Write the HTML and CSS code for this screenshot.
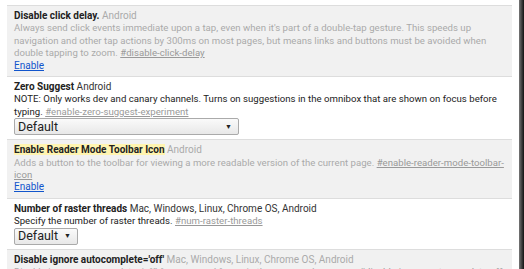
FILE: index.html
```html
<!DOCTYPE html>
<html>
<head>
<meta charset="utf-8">
<link rel="stylesheet" href="styles.css">
</head>
<body>
<div class="page">
  <div class="list">
    <div class="exp disabled">
      <div class="line"><span class="name">Disable click delay.</span> <span class="plat">Android</span></div>
      <div class="desc">Always send click events immediate upon a tap, even when it's part of a double-tap gesture. This speeds up navigation and other tap actions by 300ms on most pages, but means links and buttons must be avoided when double tapping to zoom. <a class="hash" href="#">#disable-click-delay</a></div>
      <div class="line"><a class="act" href="#">Enable</a></div>
    </div>
    <div class="exp">
      <div class="line"><span class="name">Zero Suggest</span> <span class="plat">Android</span></div>
      <div class="desc">NOTE: Only works dev and canary channels. Turns on suggestions in the omnibox that are shown on focus before typing. <a class="hash" href="#">#enable-zero-suggest-experiment</a></div>
      <div class="sel wide"><span>Default</span><span class="arr">▼</span></div>
    </div>
    <div class="exp disabled">
      <div class="line"><span class="name hl">Enable Reader Mode Toolbar Icon</span> <span class="plat">Android</span></div>
      <div class="desc">Adds a button to the toolbar for viewing a more readable version of the current page. <a class="hash" href="#">#enable-reader-mode-toolbar-icon</a></div>
      <div class="line"><a class="act" href="#">Enable</a></div>
    </div>
    <div class="exp">
      <div class="line"><span class="name">Number of raster threads</span> <span class="plat">Mac, Windows, Linux, Chrome OS, Android</span></div>
      <div class="desc">Specify the number of raster threads. <a class="hash" href="#">#num-raster-threads</a></div>
      <div class="sel"><span>Default</span><span class="arr">▼</span></div>
    </div>
    <div class="exp disabled">
      <div class="line"><span class="name">Disable ignore autocomplete='off'</span> <span class="plat">Mac, Windows, Linux, Chrome OS, Android</span></div>
      <div class="desc">Disable ignore autocomplete='off' for password forms in the password manager. <a class="hash" href="#">#disable-ignore-autocomplete-off</a></div>
    </div>
  </div>
  <div class="edge"></div>
</div>
</body>
</html>
```
FILE: styles.css
```css
html, body { margin: 0; padding: 0; background: #fff; }
body { font-family: Roboto, "Noto Sans", sans-serif; font-size: 10px; line-height: 12.4px; color: #222; overflow: hidden; height: 269px; }
.page { display: flex; height: 269px; }
.list { width: 505px; margin-left: 7px; padding-top: 5px; }
.edge { margin-left: 7px; width: 5px; background: linear-gradient(to right, #777, #111); }
.exp { border-top: 1px solid #ddd; padding: 4px 4px 4px 7px; }
.exp.disabled { background: #f1f1f1; color: #aaa; }
.desc { font-size: 9.6px; letter-spacing: 0.02px; }
.name { font-weight: bold; color: #222; }
.plat { color: #333; }
.disabled .plat { color: #aaa; }
.hl { background: #fff4b0; }
.hash { color: #999; }
.act { color: #15c; }
.sel { display: inline-flex; align-items: center; justify-content: space-between; box-sizing: border-box; height: 17px; border: 1px solid #aaa; border-radius: 2px; background: linear-gradient(#fafafa, #e8e8e8); font-size: 12.5px; color: #222; padding: 0 6px 0 3px; gap: 6px; vertical-align: top; }
.sel.wide { width: 225px; }
.arr { font-size: 7px; }
```
